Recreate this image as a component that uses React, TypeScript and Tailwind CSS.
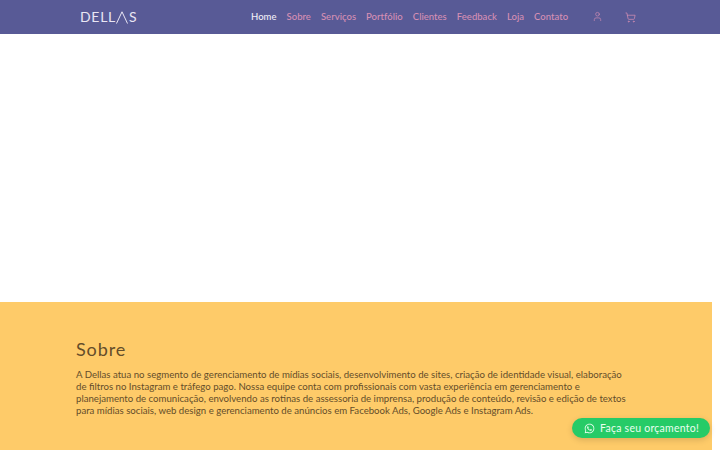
import React from 'react';
import { User, ShoppingCart } from 'lucide-react';
import { FaWhatsapp } from 'react-icons/fa';

const links = ['Sobre', 'Serviços', 'Portfólio', 'Clientes', 'Feedback', 'Loja', 'Contato'];

export default function App() {
  return (
    <div className="relative h-[450px] w-[720px] overflow-hidden bg-white font-['Lato',sans-serif]">
      {/* Navbar */}
      <header className="flex h-[34px] items-center bg-[#585a96] pl-[80px]">
        <div className="flex w-[171px] items-center text-[14px] leading-none tracking-[0.7px] text-[#e9e6f4]">
          <span>DELL</span>
          <svg width="12" height="13" viewBox="0 0 12 13" fill="none" stroke="#e9e6f4" strokeWidth="1">
            <path d="M0.5 12.5 L6 0.8 L11.5 12.5" />
          </svg>
          <span className="ml-[1px]">S</span>
        </div>
        <nav className="flex items-center gap-[10px] text-[9.5px] font-medium tracking-[0.03px] text-[#d58fb4]">
          <a className="text-[#f1eff7]">Home</a>
          {links.map(l => (
            <a key={l}>{l}</a>
          ))}
          <User className="ml-[14px] h-[11px] w-[11px] -translate-y-px text-[#d58fb4]" strokeWidth={1.4} />
          <ShoppingCart className="ml-[12px] h-[11px] w-[11px] text-[#d58fb4]" strokeWidth={1.6} />
        </nav>
      </header>

      {/* Hero (empty) */}
      <div className="h-[268px]" />

      {/* Sobre */}
      <section className="h-[148px] w-[712px] bg-[#fecb69] pl-[76px] pt-[36px] text-[#644d2a]">
        <h2 className="text-[18px] leading-[22px] tracking-[0.9px]">Sobre</h2>
        <p className="mt-[8px] w-[620px] text-[9.65px] leading-[12px]">
          A Dellas atua no segmento de gerenciamento de mídias sociais, desenvolvimento de sites, criação de identidade visual, elaboração
          <br />
          de filtros no Instagram e tráfego pago. Nossa equipe conta com profissionais com vasta experiência em gerenciamento e
          <br />
          planejamento de comunicação, envolvendo as rotinas de assessoria de imprensa, produção de conteúdo, revisão e edição de textos
          <br />
          para mídias sociais, web design e gerenciamento de anúncios em Facebook Ads, Google Ads e Instagram Ads.
        </p>
      </section>

      {/* Floating button */}
      <button className="absolute left-[572px] top-[418px] flex h-[20px] w-[138px] items-center gap-[5px] rounded-full bg-[#26cb67] pl-[12px] pt-px text-[10.5px] tracking-[0.25px] text-[#eafff0] shadow-[0_2px_6px_rgba(0,0,0,0.15)]">
        <FaWhatsapp className="h-[11px] w-[11px]" />
        Faça seu orçamento!
      </button>
    </div>
  );
}
